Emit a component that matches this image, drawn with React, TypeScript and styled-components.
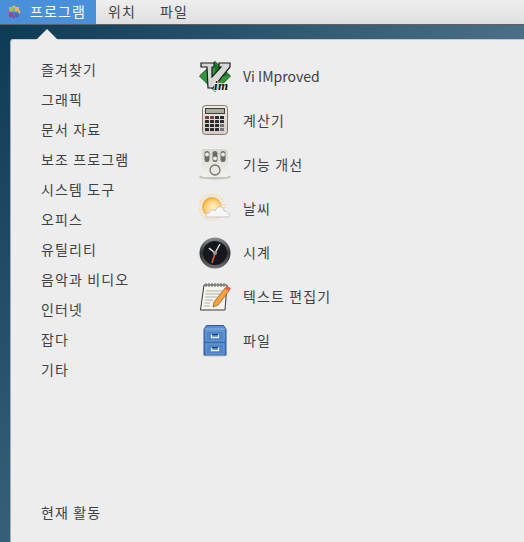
import React from 'react';
import styled, { createGlobalStyle } from 'styled-components';

const GlobalStyle = createGlobalStyle`
  html, body {
    margin: 0;
    padding: 0;
    height: 100%;
    overflow: hidden;
  }
  body {
    font-family: "Noto Sans CJK KR", "Noto Sans", sans-serif;
  }
`;

const categories = [
  '즐겨찾기', '그래픽', '문서 자료', '보조 프로그램', '시스템 도구', '오피스',
  '유틸리티', '음악과 비디오', '인터넷', '잡다', '기타',
];

const VimIcon = () => (
  <svg width="32" height="32" viewBox="0 0 32 32">
    <path d="M16 0.5 L31.5 15 L16 30.5 L0.5 15 Z" fill="#2f9a3a" stroke="#14561a" />
    <path d="M16 2 L30 15 L16 15 Z" fill="#167a2a" />
    <path
      d="M2 2 H15 V6 H13 V16 L22 6 H20 V2 H31 V6 L14 27 H9 L8 6 H2 Z"
      fill="#d6d7d7"
      stroke="#1a1a1a"
      strokeWidth="1.2"
    />
    <VimLetters x="15" y="29">im</VimLetters>
  </svg>
);

const CalcIcon = () => (
  <svg width="32" height="32" viewBox="0 0 32 32">
    <defs>
      <linearGradient id="calcBody" x1="0" y1="0" x2="0" y2="1">
        <stop offset="0" stopColor="#efeae5" />
        <stop offset="1" stopColor="#d4cbc4" />
      </linearGradient>
    </defs>
    <rect x="3.5" y="0.5" width="25" height="29" rx="3" fill="url(#calcBody)" stroke="#85786f" />
    <rect x="6.5" y="3.5" width="19" height="5" fill="#a9ad9c" stroke="#3b3f44" />
    {[11, 15, 19, 23].flatMap((y, r) =>
      [6, 11, 16, 21].map((x, c) => (
        <rect
          key={`${r}-${c}`}
          x={x}
          y={y}
          width="4"
          height="3"
          rx="0.5"
          fill={r === 0 && c < 2 ? '#7a3b3b' : c === 3 && r > 1 ? '#6f7378' : '#26292e'}
        />
      ))
    )}
  </svg>
);

const TweakIcon = () => (
  <svg width="32" height="32" viewBox="0 0 32 32">
    <defs>
      <linearGradient id="tweakBody" x1="0" y1="0" x2="0" y2="1">
        <stop offset="0" stopColor="#d9d8d0" />
        <stop offset="1" stopColor="#f2f1ea" />
      </linearGradient>
    </defs>
    <ellipse cx="16" cy="28" rx="16" ry="2.5" fill="#c4c4be" />
    <rect x="3" y="0" width="26" height="28" rx="1.5" fill="url(#tweakBody)" />
    {[8, 16, 24].map((x, i) => (
      <g key={x}>
        <rect x={x - 2.5} y="2" width="5" height="11" rx="2.5" fill="#6a6c6b" />
        <circle cx={x} cy={i === 1 ? 9.5 : 5.5} r="1.9" fill="#ecece6" />
      </g>
    ))}
    <circle cx="16" cy="21" r="5" fill="#e8e8e0" stroke="#77776f" strokeWidth="1.3" />
  </svg>
);

const WeatherIcon = () => (
  <svg width="32" height="32" viewBox="0 0 32 32">
    <defs>
      <radialGradient id="sun" cx="0.55" cy="0.55" r="0.55">
        <stop offset="0" stopColor="#fff0c4" />
        <stop offset="0.6" stopColor="#fdd88c" />
        <stop offset="1" stopColor="#f3a52e" />
      </radialGradient>
    </defs>
    <circle cx="13" cy="14" r="12.5" fill="none" stroke="#f8d48a" strokeWidth="2.4" strokeDasharray="1 2" />
    <circle cx="13" cy="14" r="10" fill="url(#sun)" />
    <path
      d="M9 24 C6 24 6 20 10 20 C11 17 14 16 16 18 C18 12 25 13 25 18 C29 18 32 23 30 24 Z"
      fill="#f6f6f6"
      stroke="#c8c8c8"
    />
  </svg>
);

const ClockIcon = () => (
  <svg width="32" height="32" viewBox="0 0 32 32">
    <defs>
      <linearGradient id="clockRing" x1="0" y1="0" x2="0" y2="1">
        <stop offset="0" stopColor="#8d8f92" />
        <stop offset="0.5" stopColor="#2f3134" />
        <stop offset="1" stopColor="#6d6f72" />
      </linearGradient>
    </defs>
    <circle cx="16" cy="16" r="15.5" fill="url(#clockRing)" />
    <circle cx="16" cy="16" r="12" fill="#14171c" />
    <path d="M16 16 L10 11" stroke="#e8e8e8" strokeWidth="1.6" />
    <path d="M16 16 L21 7" stroke="#e8e8e8" strokeWidth="1.4" />
    <path d="M16 16 L13 26" stroke="#d4601c" strokeWidth="1.6" />
    <circle cx="16" cy="16" r="2" fill="#9a9a9a" />
  </svg>
);

const EditorIcon = () => (
  <svg width="32" height="32" viewBox="0 0 32 32">
    <path d="M5 4 H28 L26 29 H1.5 Z" fill="#f5f4ee" stroke="#3a3a36" />
    <path d="M7 2 V6 M10 2 V6 M13 2 V6 M16 2 V6 M19 2 V6 M22 2 V6 M25 2 V6" stroke="#6a6a64" />
    <path d="M7 10 H23 M6.5 13 H21 M6 16 H18 M6 19 H14 M5.5 22 H11 M5 25 H11" stroke="#b4b3aa" />
    <path d="M26 7 L30 10 L19 24 L14 26 L15 21 Z" fill="#f2a23e" stroke="#8f5412" strokeWidth="0.7" />
    <path d="M26 7 L28 4.5 L32 7.5 L30 10 Z" fill="#e85a5a" />
  </svg>
);

const FilesIcon = () => (
  <svg width="32" height="32" viewBox="0 0 32 32">
    <defs>
      <linearGradient id="cabinet" x1="0" y1="0" x2="0" y2="1">
        <stop offset="0" stopColor="#5b8fd0" />
        <stop offset="1" stopColor="#3b6fb4" />
      </linearGradient>
    </defs>
    <ellipse cx="16" cy="30.5" rx="13" ry="1.5" fill="#d0d0d0" />
    <path d="M7.5 0.5 H24.5 L27 4 V30 H5 V4 Z" fill="url(#cabinet)" stroke="#2a5a98" />
    <path d="M5.5 4 H26.5" stroke="#8fb5e4" />
    <path d="M6 17 H26" stroke="#2a5a98" />
    <rect x="7" y="6" width="18" height="10" fill="#4f84c8" stroke="#6f9fd8" />
    <rect x="7" y="19" width="18" height="10" fill="#4f84c8" stroke="#6f9fd8" />
    <path d="M12.5 9.5 V12.5 H19.5 V9.5" fill="none" stroke="#e8eef6" strokeWidth="1.3" />
    <path d="M12.5 22.5 V25.5 H19.5 V22.5" fill="none" stroke="#e8eef6" strokeWidth="1.3" />
    <path d="M13 9.5 H19" stroke="#1f3f6b" />
    <path d="M13 22.5 H19" stroke="#1f3f6b" />
  </svg>
);

const FootLogo = () => (
  <svg width="14" height="14" viewBox="0 0 14 14">
    <rect x="2" y="2" width="4.5" height="4.5" fill="#a4c94a" />
    <rect x="7.5" y="2" width="4.5" height="4.5" fill="#e8b84a" />
    <rect x="2" y="7.5" width="4.5" height="4.5" fill="#8d4a9c" />
    <rect x="7.5" y="7.5" width="4.5" height="4.5" fill="#4f68b4" />
    <path d="M7 0 L9 2.5 H5 Z" fill="#e8c25a" />
    <path d="M0 7 L2.5 5 V9 Z" fill="#b85aa0" />
    <path d="M14 7 L11.5 5 V9 Z" fill="#e8c25a" />
    <path d="M7 14 L9 11.5 H5 Z" fill="#8d4a9c" />
  </svg>
);

const apps = [
  { name: 'Vi IMproved', icon: <VimIcon />, latin: true },
  { name: '계산기', icon: <CalcIcon /> },
  { name: '기능 개선', icon: <TweakIcon /> },
  { name: '날씨', icon: <WeatherIcon /> },
  { name: '시계', icon: <ClockIcon /> },
  { name: '텍스트 편집기', icon: <EditorIcon /> },
  { name: '파일', icon: <FilesIcon /> },
];

export default function App() {
  return (
    <Screen>
      <GlobalStyle />
      <TopBar>
        <AppsTab>
          <FootLogo />
          <BarLabel>프로그램</BarLabel>
        </AppsTab>
        <BarItem><BarLabel>위치</BarLabel></BarItem>
        <BarItem><BarLabel>파일</BarLabel></BarItem>
      </TopBar>
      <Desktop>
        <Menu>
          <Arrow />
          <CategoryPane>
            <CategoryList>
              {categories.map((c) => (
                <Category key={c}>{c}</Category>
              ))}
            </CategoryList>
            <Category>현재 활동</Category>
          </CategoryPane>
          <AppList>
            {apps.map((a) => (
              <AppRow key={a.name}>
                {a.icon}
                <AppName $latin={a.latin}>{a.name}</AppName>
              </AppRow>
            ))}
          </AppList>
        </Menu>
      </Desktop>
    </Screen>
  );
}

const Screen = styled.div`
  width: 524px;
  height: 542px;
  display: flex;
  flex-direction: column;
  overflow: hidden;
  font-size: 14px;
  letter-spacing: 1.1px;
  color: #3d4245;
`;

const VimLetters = styled.text`
  font-family: "Liberation Serif", serif;
  font-size: 13px;
  font-weight: bold;
  font-style: italic;
  letter-spacing: 0.5px;
  fill: #111111;
  stroke: #f2f2f2;
  stroke-width: 1.5px;
  paint-order: stroke;
`;

const TopBar = styled.div`
  height: 24px;
  flex: none;
  display: flex;
  background: linear-gradient(#eeeeee, #e0e0e0);
  border-bottom: 1px solid #5f6163;
`;

const BarLabel = styled.span`
  margin-top: -2px;
`;

const AppsTab = styled.div`
  width: 96px;
  height: 24px;
  box-sizing: border-box;
  padding-left: 7px;
  display: flex;
  align-items: center;
  gap: 9px;
  background: #4a90d9;
  color: #ffffff;
`;

const BarItem = styled.div`
  height: 24px;
  padding: 0 12px;
  display: flex;
  align-items: center;
`;

const Desktop = styled.div`
  flex: 1;
  padding: 14px 0 0 10px;
  background: linear-gradient(125deg, #0d3a55 0%, #4a7088 60%, #4a7088 100%);
`;

const Menu = styled.div`
  position: relative;
  height: 100%;
  display: flex;
  box-sizing: border-box;
  background: #ededed;
  border-left: 1px solid #a9a9a9;
  border-top: 1px solid #c8c8c8;
  border-top-left-radius: 3px;
`;

const Arrow = styled.div`
  position: absolute;
  left: 25px;
  top: -11px;
  width: 0;
  height: 0;
  border-left: 11.5px solid transparent;
  border-right: 11.5px solid transparent;
  border-bottom: 11px solid #ededed;
`;

const CategoryPane = styled.div`
  width: 188px;
  padding: 14px 0 15px 30px;
  box-sizing: border-box;
  display: flex;
  flex-direction: column;
  justify-content: space-between;
`;

const CategoryList = styled.div`
  display: flex;
  flex-direction: column;
`;

const Category = styled.div`
  height: 30px;
  line-height: 30px;
  white-space: nowrap;
`;

const AppList = styled.div`
  padding-top: 15px;
  display: flex;
  flex-direction: column;
`;

const AppRow = styled.div`
  height: 44px;
  display: flex;
  align-items: center;
  gap: 12px;
`;

const AppName = styled.span<{ $latin?: boolean }>`
  margin-top: -2px;
  letter-spacing: ${({ $latin }) => ($latin ? '0' : '1.1px')};
`;
